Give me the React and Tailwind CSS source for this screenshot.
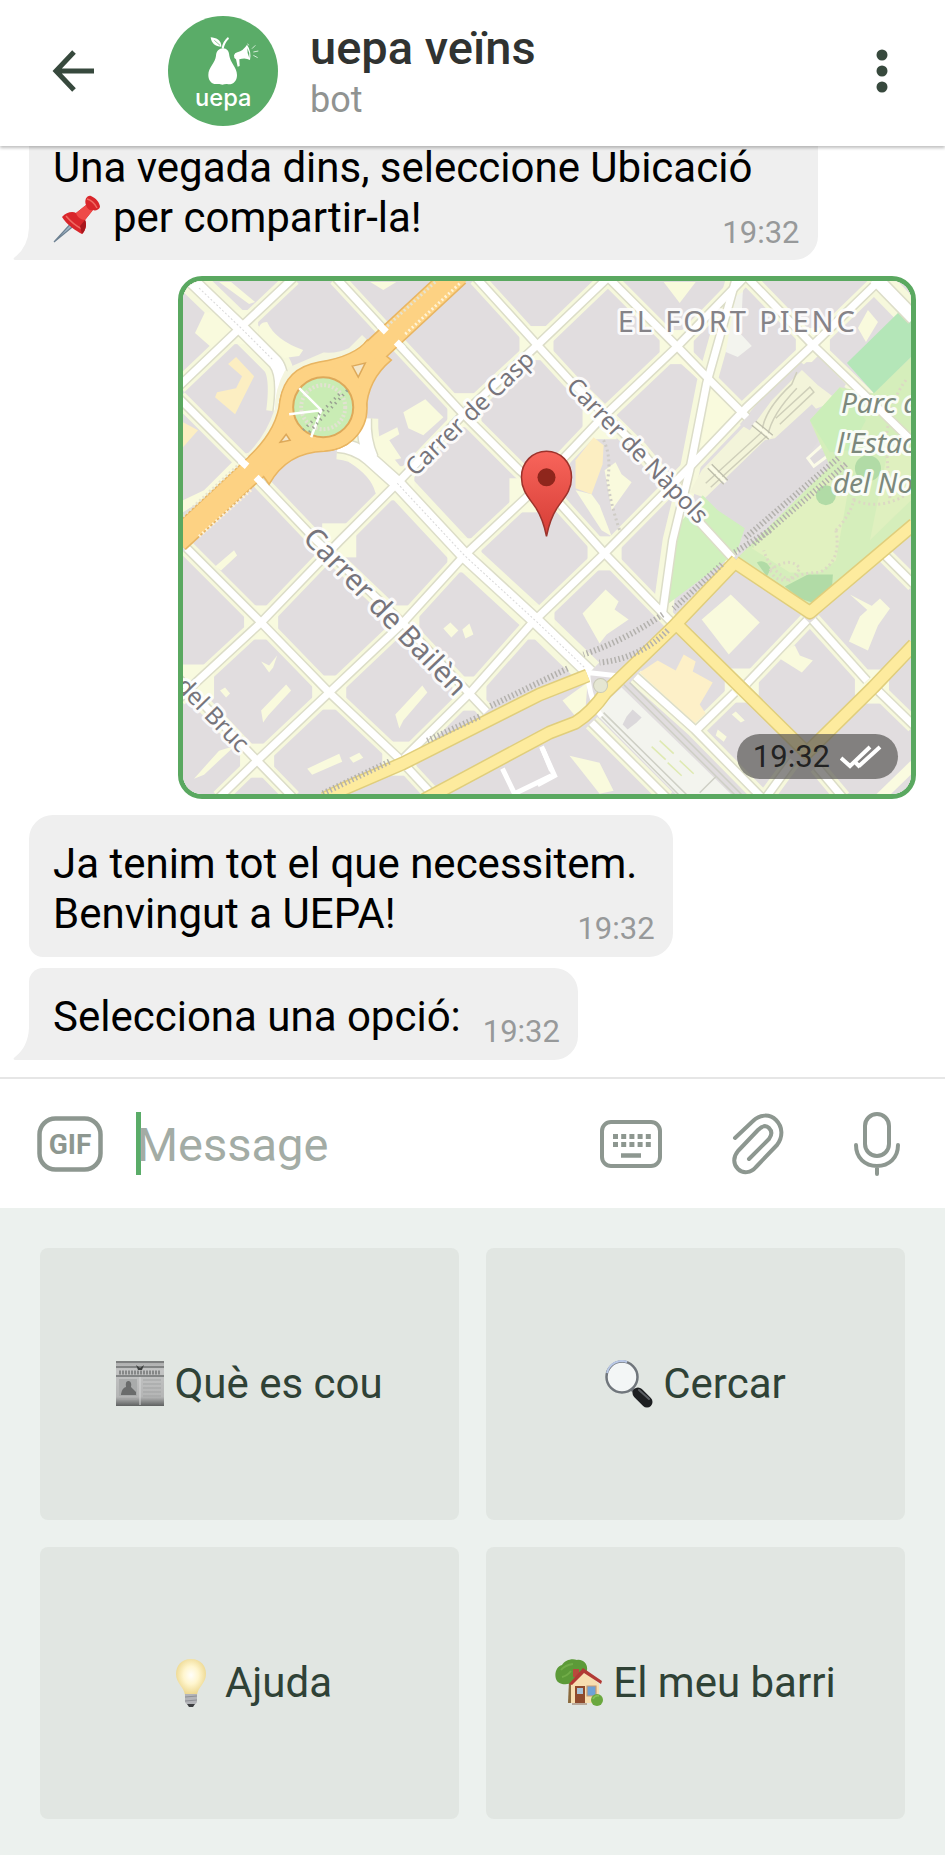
import React from "react";

/* ---------- Map data ---------- */

const minorRoads = [
  "M337 278 L387 332 M397 342 L463 413 L520 470 L560 503 L605 553 L672 622",
  "M477 278 L537 344 L570 380 L640 449 L700 522 L733 558",
  "M609 278 L677 346 L712 382 L747 417",
  "M748 278 L813 345 L867 397 L911 440",
  "M180 398 L248 466",
  "M257 477 L317 540 L403 622 L470 693 L487 711",
  "M188 548 L262 622 L330 692 L400 758",
  "M408 767 L434 795",
  "M178 676 L258 760 L294 797",
  "M180 386 L242 327 L294 278",
  "M608 278 L540 343 L470 408 L398 483 L340 541 L262 622 L198 681 L180 698",
  "M744 278 L677 347 L600 420 L527 497 L465 555 L403 623 L330 692 L258 760 L220 797",
  "M882 278 L813 345 L747 407 L687 470 L605 553 L533 622 L470 693 L405 757",
  "M735 692 L695 731",
  "M747 683 L807 620",
  "M813 620 L867 680",
  "M878 690 L914 725",
  "M884 554 L914 584",
  "M592 722 L667 797",
  "M636 676 L695 729 L762 797",
  "M817 766 L843 797",
  "M793 760 L766 797",
];

const diagonalRoad = "M736 280 L707 383 L690 470 L673 540 L663 612";
const wideRoads = [
  "M190 278 L242 328 L276 362 Q286 374 281 412",
  "M338 445 Q356 446 370 458 L398 483 L465 555 L538 622 L590 672",
  "M365 418 Q364 440 372 458",
  "M875 278 L914 318",
];
const pathways = [
  "M542 746 L555 775 L538 784",
  "M503 768 L517 797 M515 793 L552 775 M543 748 L552 770",
  "M588 672 Q590 700 602 716 M588 672 L624 676",
];
const yellowRoads = [
  "M325 798 L345 788 L403 763 L540 694 L588 675",
  "M425 799 L550 732 L576 722 Q592 712 606 692 L673 627 L737 560",
  "M735 562 L810 612 L914 524",
  "M677 624 L743 689 L807 752 L873 687 L914 644",
];
const crossings = [
  [242, 327], [537, 343], [398, 483], [677, 347], [813, 345], [465, 555], [605, 553],
  [262, 622], [403, 622], [538, 622], [330, 692], [470, 693], [258, 760], [198, 681],
  [400, 758], [465, 410], [600, 422], [527, 495], [340, 540], [742, 685], [872, 686],
];

const tracks = [
  "M838 458 L745 538",
  "M846 464 L752 545",
  "M770 530 L735 552",
  "M722 564 L674 608",
  "M663 614 Q625 640 584 654",
  "M668 630 Q640 658 600 662",
  "M568 668 L490 706",
  "M480 716 L428 740",
  "M390 761 L323 793",
];

function LocationMap() {
  return (
    <svg
      viewBox="184 281 727 512"
      className="block h-auto w-full bg-[#e1dddf]"
      role="img"
      aria-label="Mapa: El Fort Pienc"
      preserveAspectRatio="xMidYMid slice"
    >
      <defs>
        <linearGradient id="marker" x1="0" y1="0" x2="0" y2="1">
          <stop offset="0" stopColor="#f8655b" />
          <stop offset="1" stopColor="#d63d36" />
        </linearGradient>
      </defs>
      <rect x="184" y="281" width="727" height="512" fill="#e1dddf" />

      {/* verges */}
      <g fill="none" stroke="#f6f8dc" strokeWidth="16">
        {minorRoads.map((d) => (
          <path key={d} d={d} />
        ))}
        <path d={diagonalRoad} strokeWidth="20" />
        {wideRoads.map((d) => (
          <path key={d} d={d} strokeWidth="28" />
        ))}
      </g>
      <g fill="#f8fadf">
        {crossings.map(([x, y]) => (
          <rect key={`${x}-${y}`} x={x - 17} y={y - 17} width="34" height="34" />
        ))}
      </g>

      {/* open ground and courtyards */}
      <g fill="#f9fadd">
        <path d="M712 382 L745 412 L710 440 L700 452Z" />
        <path d="M664 282 H696 L680 303Z M371 282 L384 290 L397 282Z M220 282 L250 304 L256 302 L232 282Z" />
        <path d="M206 312 L196 333 L213 348 L238 330 L215 313Z" />
        <path d="M268 322 Q258 322 260 334 L285 358 L300 356 L304 350 Q276 340 268 322Z" />
        <path d="M252 452 L240 455 L205 490 L184 500 L184 512 L262 464Z" />
        <path d="M346 455 L350 462 Q372 476 376 492 L382 504 L394 490 L398 478 L378 460Z" />
        <path d="M372 432 L392 455 L404 470 L412 478 L398 484 L366 452Z" />
        <path d="M404 412 L426 399 L444 417 L424 435 L409 428Z" />
        <path d="M372 440 L398 427 L400 434 L390 440 L402 458 L385 462Z" />
        <path d="M702 619 L731 594 L760 622 L729 654Z" />
        <path d="M583 613 L606 589 L619 601 L615 609 L629 619 L607 634 L600 643Z" />
        <path d="M860 616 L880 598 L890 608 L878 625 L868 650 L849 641Z M850 594 L873 606 L868 610Z" />
        <path d="M775 655 L795 645 L800 655 L813 660 L802 672Z" />
        <path d="M563 700 L588 682 L586 708 L576 716Z" />
        <path d="M570 755 L600 762 L614 790 L600 793Z" />
        <path d="M262 710 L287 684 L292 690 L269 715 L264 722Z M396 714 L423 685 L428 692 L404 720 L400 728Z" />
        <path d="M308 768 L340 753 L343 761 L313 774Z M350 757 L360 752 L364 757 L354 762Z" />
        <path d="M195 778 L220 750 L236 745 L205 774Z M216 566 L235 550 L238 555 L222 570Z" />
        <path d="M444 628 L451 622 L459 630 L452 637Z M463 629 L470 623 L474 634 L466 638Z" />
        <path d="M262 661 l8 4 l8 -10 l-4 12 l-4 5z M221 690 l5 -3 l5 6 l-4 4z" />
        <path d="M736 711 l9 9 l-4 2 l-9 -8z M716 735 l2 -6 l9 7 l-3 5z" />
        <path d="M605 470 L612 510 L632 482 L622 474 L616 462Z" />
        <path d="M576 490 L592 494 L600 505 L612 536 L602 530Z" />
        <path d="M858 328 L868 310 L878 322 L866 342Z" />
        <path d="M666 350 L680 346 L708 370 L704 384Z" />
      </g>
      <path d="M736 296 L743 292 L741 334 L752 346 L738 357 L726 352Z" fill="#f3f4ee" />
      <g fill="#fceec2">
        <path d="M237 357 L255 376 L236 414 L216 397 L218 392 L237 388 L243 376 L229 364Z" />
        <path d="M184 422 L199 430 L184 447Z" />
        <path d="M576 460 L594 437 L604 445 L603 464 L592 494 L576 488Z" />
      </g>
      <path
        d="M640 672 L658 660 L676 670 L684 654 L696 661 L693 671 L713 682 L700 704 L706 713 L695 723Z"
        fill="#fdf0c8"
      />

      {/* station */}
      <path d="M690 492 L702 470 L800 368 L818 385 L838 400 L812 410 L712 500Z" fill="#f3f4da" />
      <path d="M772 400 L806 366 L798 360 L760 400 L740 424 L750 430Z" fill="#e1dddf" />
      <path d="M808 366 L818 356 L846 384 L838 396Z" fill="#e1dddf" />
      <path d="M703 500 L765 440 L775 438 L812 404 L830 424 L812 450 L838 452 L745 540 L718 512Z" fill="#dfdbdd" />
      <g fill="none" stroke="#cfcfba" strokeWidth="1.5">
        <path d="M706 483 L762 432 Q764 410 792 384 L797 372 M711 487 L768 435 Q772 414 797 388 M780 424 L814 392 L810 387 L776 418" />
      </g>
      <g fill="none" stroke="#fbfbe8" strokeWidth="3">
        <path d="M754 423 l17 14 M710 466 l16 16" />
        <path d="M828 440 L808 458 L814 466 L838 448" />
      </g>
      <g fill="none" stroke="#bcbcab" strokeWidth="1.2">
        <path d="M756 421 l17 14 M752 425 l17 14 M712 464 l16 16 M708 468 l16 16" />
      </g>

      {/* park */}
      <path d="M810 420 L840 387 L873 393 L911 357 V531 L810 614 L737 558 L830 466Z" fill="#d5eebb" />
      <path d="M752 548 L830 474 L850 480 L836 560 L820 572 L790 572Z" fill="#e1f1c0" />
      <path d="M890 440 L911 430 V500 L870 540Z" fill="#dff0bf" />
      <path d="M810 420 L840 387 L866 420 L850 450 L830 452Z" fill="#cbeeb9" />
      <path d="M847 363 L900 311 L911 320 V357 L874 393Z" fill="#b4e6b8" />
      <path d="M703 495 L718 510 L745 528 L737 552 L665 606 L676 528Z" fill="#d0f0bd" />
      <g fill="#b1dba6">
        <path d="M785 586 L808 574 L833 574 L832 588 L812 602 L800 598Z" />
        <circle cx="868" cy="468" r="13" />
        <circle cx="826" cy="495" r="10" />
        <path d="M757 562 q8 -4 14 6 l-4 8z" />
      </g>
      <g fill="none" stroke="#dcd9c4" strokeWidth="3" strokeDasharray="2 3">
        <path d="M836 530 Q850 515 854 500 Q880 510 905 495 M836 530 Q842 560 820 572 Q800 572 790 580 Q770 570 764 550 M854 500 Q850 470 840 462" />
        <path d="M770 570 Q790 555 800 568 Q790 585 775 577Z M906 380 Q890 400 886 440 L890 500" />
        <path d="M604 440 Q612 456 608 480 Q610 500 620 530" stroke="#cfccc6" />
      </g>

      {/* freight yard */}
      <path d="M595 712 L622 687 L735 797 H680Z" fill="#f3f4ee" />
      <path d="M627 716 L633 709 L642 717 L637 722 L628 729 L623 724Z" fill="#dbd8db" />
      <g fill="none" stroke="#cfd0c6" strokeWidth="1.5">
        <path d="M600 714 L682 797 M604 712 L690 797 M624 684 L738 797 M630 682 L745 797 M700 792 L716 776" />
        <path d="M660 740 l14 13 M652 746 l14 13 M680 760 l14 13 M668 762 l14 13" stroke="#dfeab2" />
      </g>

      {/* street casings */}
      <g fill="none" stroke="#dcddc8" strokeWidth="10">
        {minorRoads.map((d) => (
          <path key={d} d={d} />
        ))}
        <path d={diagonalRoad} />
        {wideRoads.map((d) => (
          <path key={d} d={d} strokeWidth="16" />
        ))}
      </g>
      <g fill="none" stroke="#ffffff" strokeWidth="7">
        {minorRoads.map((d) => (
          <path key={d} d={d} />
        ))}
        <path d={diagonalRoad} />
        {wideRoads.map((d) => (
          <path key={d} d={d} strokeWidth="13" />
        ))}
        {pathways.map((d) => (
          <path key={d} d={d} strokeWidth="5" />
        ))}
      </g>
      <g fill="none" stroke="#d9d9d9" strokeWidth="1" strokeDasharray="2 2">
        <path d="M398 483 L465 555 L538 622 L586 668" />
        <path d="M200 288 L242 328 L274 360" />
      </g>

      {/* secondary roads */}
      <path d="M914 764 L880 797" fill="none" stroke="#fafbe0" strokeWidth="10" />
      <g fill="none" stroke="#e0ce7c" strokeWidth="14" strokeLinejoin="round">
        {yellowRoads.map((d) => (
          <path key={d} d={d} />
        ))}
      </g>
      <g fill="none" stroke="#fdeb9e" strokeWidth="11" strokeLinejoin="round">
        {yellowRoads.map((d) => (
          <path key={d} d={d} />
        ))}
      </g>
      <circle cx="601" cy="685" r="7" fill="#e5e6d2" stroke="#c9cab8" />

      {/* railway */}
      <g fill="none" stroke="#b3b1ad" strokeWidth="6" strokeDasharray="1.5 2.5">
        {tracks.map((d) => (
          <path key={d} d={d} />
        ))}
      </g>

      {/* main avenue and roundabout */}
      <path d="M366 338 L352 352 Q340 358 325 357 L290 372 M290 372 Q280 390 280 410 Q270 440 250 458" fill="none" stroke="#f4f5de" strokeWidth="9" />
      <g fill="none" stroke="#e8b562">
        <path d="M178 540 L262 462" strokeWidth="26" />
        <path d="M374 352 L458 274" strokeWidth="26" />
        <ellipse cx="324" cy="408" rx="37" ry="36" strokeWidth="15" />
      </g>
      <path
        d="M250 456 Q278 430 281 400 Q286 368 320 362 Q356 356 368 340 L392 360 Q368 380 367 410 Q362 448 325 451 Q288 452 270 484Z"
        fill="#fdd283"
        stroke="#e8b562"
        strokeWidth="1.5"
      />
      <g fill="none" stroke="#fdd283">
        <path d="M178 540 L264 460" strokeWidth="23" />
        <path d="M372 354 L460 272" strokeWidth="23" />
        <ellipse cx="324" cy="408" rx="37" ry="36" strokeWidth="12" />
      </g>
      <ellipse cx="324" cy="407" rx="30" ry="30" fill="#c9ecb4" stroke="#dda95a" strokeWidth="2" />
      <ellipse cx="324" cy="407" rx="22" ry="22" fill="none" stroke="#e2e2d2" strokeWidth="4" strokeDasharray="2 2" />
      <path d="M290 414 L322 410 L312 437 M322 410 L300 388" fill="none" stroke="#fff" strokeWidth="2.5" />
      <path d="M304 430 L340 394 M310 432 L350 388" fill="none" stroke="#9aa392" strokeWidth="3" strokeDasharray="1.5 4" />
      <g fill="#f3e6c8" stroke="#dda95a" strokeWidth="1.5">
        <path d="M353 366 L366 363 L359 377Z" />
        <path d="M281 442 L291 440 L287 434Z" />
      </g>
      <g fill="none" strokeDasharray="2 2.5">
        <path d="M406 334 L462 282 M200 536 L254 488" stroke="#fff3d6" strokeWidth="3" />
        <path d="M388 326 L436 282 M184 516 L240 464" stroke="#e6e3d0" strokeWidth="3" />
      </g>
      <path d="M380 325 L387 332 M397 342 L404 349 M241 460 L248 466 M257 477 L264 484" stroke="#fff" strokeWidth="7" fill="none" />

      {/* street names */}
      <g
        fontFamily="'Noto Sans', 'Open Sans', sans-serif"
        paintOrder="stroke"
        stroke="#ffffff"
        strokeOpacity=".85"
        strokeWidth="6"
        strokeLinejoin="round"
      >
        <text x="738" y="332" textAnchor="middle" fontSize="29" fill="#858388" className="tracking-widest">
          EL FORT PIENC
        </text>
        <g fill="#77757c" fontSize="24" textAnchor="middle">
          <text transform="translate(476 419) rotate(-44)">Carrer de Casp</text>
          <text transform="translate(632 456) rotate(46)">Carrer de Nàpols</text>
          <text transform="translate(379 618) rotate(46)" fontSize="29">Carrer de Bailèn</text>
          <text transform="translate(240 753) rotate(46)" textAnchor="end">del Bruc</text>
        </g>
        <g fill="#7c887c" fontSize="28" fontStyle="italic">
          <text x="841" y="413">Parc de</text>
          <text x="837" y="453">l'Estació</text>
          <text x="833" y="493">del Nord</text>
        </g>
      </g>

      {/* marker */}
      <path
        d="M547 451 C533 451 522 462 522 477 C522 491 530 498 536 507 C542 516 545 526 547 536 C549 526 552 516 558 507 C564 498 572 491 572 477 C572 462 561 451 547 451Z"
        fill="url(#marker)"
        stroke="#9c332c"
        strokeWidth="1.5"
      />
      <circle cx="547" cy="477" r="9" fill="#8f261c" />
    </svg>
  );
}

/* ---------- Icons ---------- */

const BackIcon = () => (
  <svg viewBox="0 0 44 44" className="size-11" fill="none" stroke="#37493d" strokeWidth="5">
    <path d="M42 22 H4 M22 3 L4 22 L22 41" />
  </svg>
);

const MoreIcon = () => (
  <svg viewBox="0 0 12 44" className="h-11 w-3" fill="#37493d">
    <circle cx="6" cy="6" r="5.5" />
    <circle cx="6" cy="22" r="5.5" />
    <circle cx="6" cy="38" r="5.5" />
  </svg>
);

const Avatar = () => (
  <svg viewBox="24 24 330 330" className="size-[110px] shrink-0" role="img" aria-label="uepa">
    <circle cx="189" cy="189" r="165" fill="#5aac68" />
    <path
      d="M189 121 C177 121 169 130 168 143 C166 165 145 178 145 201 C145 219 156 230 172 228 C178 227 183 230 187 230 C192 230 198 227 204 229 C220 230 231 219 231 201 C231 178 211 165 208 143 C207 130 201 121 189 121Z"
      fill="#fff"
    />
    <path d="M185 121 Q188 100 204 87 L207 92 Q194 104 191 122Z" fill="#fff" />
    <path d="M184 116 C166 116 154 106 152 88 C168 89 184 96 184 116Z" fill="#fff" />
    <path d="M163 97 L180 112" stroke="#5aac68" strokeWidth="2" />
    <path d="M222 142 Q224 134 232 133 Q250 128 261 110 Q275 130 270 156 Q256 148 238 154 L239 174 L233 176 L228 154 Q221 150 222 142Z" fill="#fff" />
    <path d="M262 120 Q270 134 268 150 Q261 136 262 120Z" fill="#5aac68" />
    <path d="M276 122 L286 112 M280 132 L295 129 M280 142 L293 149 M266 112 L263 107" stroke="#d4ecd8" strokeWidth="3" fill="none" />
    <text x="190" y="293" textAnchor="middle" fontSize="71" fontWeight="500" fill="#fff" fontFamily="Inter, 'Open Sans', sans-serif">
      uepa
    </text>
  </svg>
);

const GifIcon = () => (
  <svg viewBox="0 0 66 56" className="h-14 w-[66px]">
    <rect x="2.5" y="2.5" width="61" height="51" rx="16" fill="none" stroke="#8d9790" strokeWidth="4.5" />
    <text x="33" y="38" textAnchor="middle" fontSize="28" fontWeight="700" fill="#8d9790" fontFamily="Roboto, sans-serif">
      GIF
    </text>
  </svg>
);

const KeyboardIcon = () => (
  <svg viewBox="0 0 62 48" className="h-12 w-[62px]">
    <rect x="2" y="2" width="58" height="44" rx="9" fill="none" stroke="#8d9790" strokeWidth="4" />
    <path d="M13 16.5 H51 M13 24.5 H51" stroke="#8d9790" strokeWidth="5" strokeDasharray="5 3.2" fill="none" />
    <path d="M21 35.5 H41" stroke="#8d9790" strokeWidth="4.5" />
  </svg>
);

const ClipIcon = () => (
  <svg viewBox="0 0 52 62" className="h-[62px] w-[52px]" fill="none" stroke="#8d9790" strokeWidth="4" strokeLinecap="round" strokeLinejoin="round">
    <path d="M3 25 L21 8 C28 1 38 1 44 7 C51 14 51 24 45 32 L24 54 C19 60 11 61 6 56 C1 51 1 44 6 38 L26 17 C30 13 34 12 37 15 C40 18 40 22 37 26 L17 46" />
  </svg>
);

const MicIcon = () => (
  <svg viewBox="0 0 46 66" className="h-[66px] w-[46px]" fill="none" stroke="#8d9790" strokeWidth="4" strokeLinecap="round">
    <rect x="11" y="3" width="24" height="42" rx="12" />
    <path d="M2 34 C2 47 11 55 23 55 C35 55 44 47 44 34 M23 55 V63" />
  </svg>
);

const DoubleCheck = () => (
  <svg viewBox="0 0 42 24" className="h-6 w-[42px]" fill="none" stroke="#fff" strokeWidth="4">
    <path d="M1 13 L10 21 L30 2 M19 21 L40 2 M16 18 L20 22" />
  </svg>
);

const PushpinEmoji = () => (
  <svg viewBox="0 0 48 48" className="mr-3 inline-block size-12 align-[-11px]" role="img" aria-label="📌">
    <path d="M1 47 L20 26 L23 29Z" fill="#9fb4c4" stroke="#6d8192" strokeWidth="1.2" />
    <path d="M9 22 C13 17 20 16 23 18 L33 10 C31 5 34 0 38 1 C43 3 47 8 47 12 C46 15 42 16 40 15 L32 25 C34 29 33 35 29 39 C23 36 13 29 9 22Z" fill="#d9262b" />
    <path d="M23 18 L33 10 C34 14 37 16 40 15 L32 25 C28 25 24 22 23 18Z" fill="#ee4a48" />
    <path d="M34 4 C38 5 42 9 44 13 M13 21 C18 27 23 31 29 34" stroke="#f06a62" strokeWidth="1.5" fill="none" />
    <path d="M29 39 C33 35 34 29 32 25 L27 31Z" fill="#a8161d" />
  </svg>
);

const NewspaperEmoji = () => (
  <svg viewBox="0 0 48 48" className="size-12 shrink-0" role="img" aria-label="📰">
    <defs>
      <linearGradient id="paper" x1="0" y1="0" x2="0" y2="1">
        <stop offset="0" stopColor="#a8a9a9" />
        <stop offset=".2" stopColor="#c3c4c4" />
        <stop offset=".8" stopColor="#b4b5b5" />
        <stop offset="1" stopColor="#5e6060" />
      </linearGradient>
    </defs>
    <rect x="0" y="1" width="48" height="45" fill="url(#paper)" />
    <path d="M0 2 H48 M0 7 H48 M0 16 H48" stroke="#6f7171" strokeWidth="1.5" />
    <path d="M3 12.5 H45" stroke="#858787" strokeWidth="4" strokeDasharray="2 1" />
    <path d="M20 5 l4 3 l4 -3 l-2 5 h-4z" fill="#3f4141" />
    <rect x="3" y="19" width="18" height="17" fill="#a9abab" />
    <path d="M5 34 Q6 28 10 27 Q9 20 13 21 Q16 22 15 27 L20 32 V35 H5Z" fill="#6a6c6c" />
    <path d="M27 20 H45 M27 24 H45 M27 28 H45 M27 32 H45 M27 36 H45 M3 39 H21" stroke="#a1a3a3" strokeWidth="1" />
    <path d="M24 17 V45" stroke="#d8d9d9" />
  </svg>
);

const MagnifierEmoji = () => (
  <svg viewBox="0 0 48 48" className="size-12 shrink-0" role="img" aria-label="🔍">
    <path d="M26 28 L31 33" stroke="#6b7075" strokeWidth="4" />
    <path d="M33 33 L42 42" stroke="#1d1f21" strokeWidth="11" strokeLinecap="round" />
    <path d="M34 30 L44 39" stroke="#5b5f63" strokeWidth="2" strokeLinecap="round" />
    <circle cx="17" cy="17" r="15.5" fill="#f3f6f6" stroke="#70767c" strokeWidth="2.5" />
    <path d="M2 13 A15 15 0 0 1 22 2" fill="none" stroke="#b9c8e6" strokeWidth="2" />
  </svg>
);

const BulbEmoji = () => (
  <svg viewBox="0 0 48 48" className="size-12 shrink-0" role="img" aria-label="💡">
    <defs>
      <radialGradient id="glow" cx=".5" cy=".45" r=".55">
        <stop offset="0" stopColor="#fffefa" />
        <stop offset=".45" stopColor="#fff6cf" />
        <stop offset="1" stopColor="#ecd68c" />
      </radialGradient>
    </defs>
    <path d="M24 0 C14 0 9 7 9 15 C9 24 17 28 18 36 H30 C31 28 39 24 39 15 C39 7 34 0 24 0Z" fill="url(#glow)" />
    <path d="M18 35 H30 V43 Q29 46 24 46 Q19 46 18 43Z" fill="#b3b4b8" />
    <path d="M18 38 L30 37 M18 42 L30 41" stroke="#8e9095" strokeWidth="1.2" />
    <path d="M20 45 H28 L26 48 H22Z" fill="#3c3e40" />
  </svg>
);

const HouseEmoji = () => (
  <svg viewBox="0 0 48 48" className="size-12 shrink-0" role="img" aria-label="🏡">
    <path d="M14 22 H18 V44 H13Z" fill="#8a6a3e" />
    <path d="M1 20 C-1 14 2 7 7 6 C10 1 17 -1 22 1 C28 0 33 5 32 11 C32 17 24 22 18 24 C11 26 3 26 1 20Z" fill="#5c9a38" />
    <path d="M6 11 Q10 6 18 5 M7 18 Q12 17 16 12" stroke="#71ad48" strokeWidth="2" fill="none" />
    <path d="M16 24 L29 11 L44 25 V44 H16Z" fill="#f7deb0" />
    <rect x="18" y="10" width="6" height="8" fill="#b84a3c" />
    <path d="M14 25 L28 9 L47 22 L46 25 L29 14 L17 26Z" fill="#b23a35" />
    <path d="M20 27 H30 V44 H20Z" fill="#8e4a2c" />
    <path d="M22 29 H28 V35 H22Z" fill="#a7c3d8" />
    <path d="M32 27 H41 V37 H32Z" fill="#6ea2d6" stroke="#c79a72" strokeWidth="1.2" />
    <path d="M17 44 H32 V46 H17Z" fill="#b9a99a" />
    <circle cx="42" cy="41" r="6" fill="#6aa83e" />
    <path d="M38 40 Q40 36 44 37" stroke="#86c257" strokeWidth="1.5" fill="none" />
  </svg>
);

/* ---------- Chat parts ---------- */

const Tail = () => (
  <svg viewBox="0 0 18 32" className="absolute bottom-0 -left-4 h-8 w-[18px]" fill="#efefef" aria-hidden="true">
    <path d="M16 0 H18 V32 H2 Q-1 31 2 29 Q15 19 16 0Z" />
  </svg>
);

const Time = () => <time className="shrink-0 text-[31px] leading-9 text-[#97999a]">19:32</time>;

const replies = [
  { label: "Què es cou", Icon: NewspaperEmoji },
  { label: "Cercar", Icon: MagnifierEmoji },
  { label: "Ajuda", Icon: BulbEmoji },
  { label: "El meu barri", Icon: HouseEmoji },
];

export default function App() {
  return (
    <div className="flex min-h-screen flex-col bg-white font-[Roboto,sans-serif] text-black">
      <header className="relative z-10 flex h-[146px] shrink-0 items-center bg-white pr-[57px] pb-1 pl-[52px] shadow-[0_2px_3px_rgba(0,0,0,0.25)]">
        <button type="button" aria-label="Enrere" className="shrink-0">
          <BackIcon />
        </button>
        <div className="ml-[72px] flex min-w-0 flex-1 items-center gap-8">
          <Avatar />
          <div className="min-w-0 pt-1">
            <h1 className="text-[47px] leading-[54px] font-medium text-[#303331]">uepa veïns</h1>
            <p className="text-[36px] leading-[50px] text-[#909391]">bot</p>
          </div>
        </div>
        <button type="button" aria-label="Més opcions" className="shrink-0">
          <MoreIcon />
        </button>
      </header>

      <main className="flex flex-1 flex-col items-start justify-end gap-4 px-[29px] pb-[17px]">
        <article className="relative -mt-1 flex max-w-full items-end rounded-br-[24px] bg-[#efefef] pr-[18px] pb-[9px] pl-6">
          <Tail />
          <p className="-mr-[30px] pb-2 text-[42px] leading-[50px]">
            Una vegada dins, seleccione Ubicació
            <br />
            <PushpinEmoji />
            per compartir-la!
          </p>
          <Time />
        </article>

        <article className="relative w-full max-w-[738px] self-end overflow-hidden rounded-[24px] border-5 border-[#5aa860]">
          <LocationMap />
          <div className="absolute right-[13px] bottom-[15px] flex h-[45px] items-center gap-2.5 rounded-full bg-[#5a5855]/70 px-4">
            <time className="text-[31px] leading-9 text-[#222]">19:32</time>
            <DoubleCheck />
          </div>
        </article>

        <article className="flex max-w-full items-end rounded-[24px] rounded-bl-[14px] bg-[#efefef] pt-[24px] pr-[18px] pb-[10px] pl-6">
          <p className="-mr-[60px] pb-2 text-[42px] leading-[50px]">
            Ja tenim tot el que necessitem.
            <br />
            Benvingut a UEPA!
          </p>
          <Time />
        </article>

        <article className="relative -mt-[5px] flex max-w-full items-end gap-[22px] rounded-tl-[14px] rounded-r-[24px] bg-[#efefef] pt-[24px] pr-[18px] pb-[10px] pl-6">
          <Tail />
          <p className="pb-2 text-[42px] leading-[50px]">Selecciona una opció:</p>
          <Time />
        </article>
      </main>

      <form
        className="flex h-[131px] shrink-0 items-center border-t-2 border-[#e6e6e6] bg-white pr-[45px] pl-[37px]"
        onSubmit={(e) => e.preventDefault()}
      >
        <button type="button" aria-label="GIF" className="mr-[33px] shrink-0">
          <GifIcon />
        </button>
        <span className="h-[63px] w-[5px] shrink-0 bg-[#5aac68]" aria-hidden="true" />
        <input
          type="text"
          aria-label="Message"
          placeholder="Message"
          className="-ml-1 h-[63px] min-w-0 flex-1 bg-transparent pt-1 text-[47px] caret-transparent outline-none placeholder:text-[#a3aca5]"
        />
        <div className="flex shrink-0 items-center gap-[70px]">
          <button type="button" aria-label="Teclat">
            <KeyboardIcon />
          </button>
          <button type="button" aria-label="Adjunta">
            <ClipIcon />
          </button>
          <button type="button" aria-label="Missatge de veu">
            <MicIcon />
          </button>
        </div>
      </form>

      <section className="grid shrink-0 grid-cols-2 gap-[27px] bg-[#ecf1ee] px-10 pt-10 pb-9" aria-label="Opcions">
        {replies.map(({ label, Icon }) => (
          <button
            key={label}
            type="button"
            className="flex h-[272px] items-center justify-center gap-2.5 rounded-lg bg-[#e1e6e2] text-[42px] leading-[50px] text-[#2f4236]"
          >
            <Icon />
            {label}
          </button>
        ))}
      </section>
    </div>
  );
}
